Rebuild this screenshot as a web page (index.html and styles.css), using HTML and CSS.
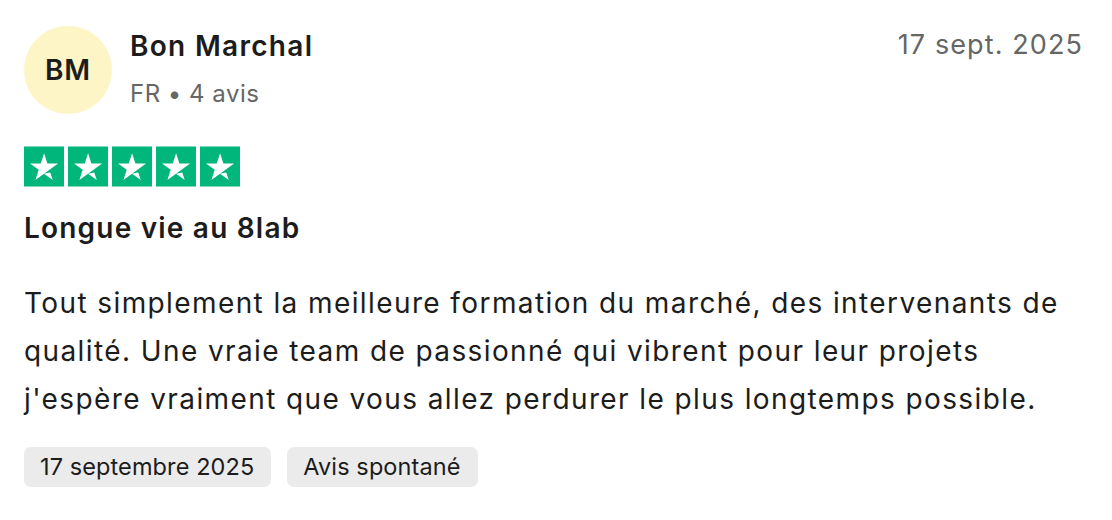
FILE: index.html
```html
<!DOCTYPE html>
<html lang="fr">
<head>
<meta charset="utf-8">
<link rel="stylesheet" href="styles.css">
</head>
<body>
<article class="review">
  <header class="head">
    <div class="avatar">BM</div>
    <div class="who">
      <div class="name">Bon Marchal</div>
      <div class="meta">FR • 4 avis</div>
    </div>
    <time class="date">17 sept. 2025</time>
  </header>
  <div class="stars">
    <svg class="star" viewBox="0 0 46.375 46.33"><path fill="#00b67a" d="M0 46.33h46.375V0H0z"/><path fill="#fff" d="M39.534 19.711L13.23 38.801l3.838-11.798-10.047-7.292h12.419l3.837-11.799 3.837 11.799h12.42zM23.279 31.51l7.183-1.51 2.862 8.8-10.045-7.29z"/></svg>
    <svg class="star" viewBox="0 0 46.375 46.33"><path fill="#00b67a" d="M0 46.33h46.375V0H0z"/><path fill="#fff" d="M39.534 19.711L13.23 38.801l3.838-11.798-10.047-7.292h12.419l3.837-11.799 3.837 11.799h12.42zM23.279 31.51l7.183-1.51 2.862 8.8-10.045-7.29z"/></svg>
    <svg class="star" viewBox="0 0 46.375 46.33"><path fill="#00b67a" d="M0 46.33h46.375V0H0z"/><path fill="#fff" d="M39.534 19.711L13.23 38.801l3.838-11.798-10.047-7.292h12.419l3.837-11.799 3.837 11.799h12.42zM23.279 31.51l7.183-1.51 2.862 8.8-10.045-7.29z"/></svg>
    <svg class="star" viewBox="0 0 46.375 46.33"><path fill="#00b67a" d="M0 46.33h46.375V0H0z"/><path fill="#fff" d="M39.534 19.711L13.23 38.801l3.838-11.798-10.047-7.292h12.419l3.837-11.799 3.837 11.799h12.42zM23.279 31.51l7.183-1.51 2.862 8.8-10.045-7.29z"/></svg>
    <svg class="star" viewBox="0 0 46.375 46.33"><path fill="#00b67a" d="M0 46.33h46.375V0H0z"/><path fill="#fff" d="M39.534 19.711L13.23 38.801l3.838-11.798-10.047-7.292h12.419l3.837-11.799 3.837 11.799h12.42zM23.279 31.51l7.183-1.51 2.862 8.8-10.045-7.29z"/></svg>
  </div>
  <h2 class="title">Longue vie au 8lab</h2>
  <p class="text">Tout simplement la meilleure formation du marché, des intervenants de qualité. Une vraie team de passionné qui vibrent pour leur projets j'espère vraiment que vous allez perdurer le plus longtemps possible.</p>
  <div class="tags">
    <span class="tag">17 septembre 2025</span>
    <span class="tag">Avis spontané</span>
  </div>
</article>
</body>
</html>
```
FILE: styles.css
```css
html, body {
  margin: 0;
  padding: 0;
  background: #ffffff;
}
body {
  font-family: Inter, "Noto Sans", sans-serif;
  color: #1c1c1c;
}
.review {
  padding: 26px 30px 0 24px;
}
.head {
  display: flex;
  align-items: flex-start;
}
.avatar {
  width: 88px;
  height: 88px;
  border-radius: 50%;
  background: #fef5c6;
  display: flex;
  align-items: center;
  justify-content: center;
  font-size: 28px;
  font-weight: 600;
  letter-spacing: 0.8px;
  color: #1c1c1c;
  flex: none;
}
.who {
  margin-left: 18px;
  flex: 1;
}
.name {
  font-size: 28px;
  font-weight: 600;
  line-height: 40px;
  letter-spacing: 1.3px;
}
.meta {
  font-size: 24px;
  line-height: 34px;
  margin-top: 11px;
  color: #666666;
  letter-spacing: 0.5px;
}
.date {
  font-size: 27px;
  line-height: 40px;
  color: #666666;
  letter-spacing: 1.1px;
  margin-top: -1px;
  margin-right: -1px;
}
.stars {
  display: flex;
  gap: 4px;
  margin-top: 32px;
}
.star {
  width: 40px;
  height: 41px;
  display: block;
}
.title {
  margin: 21px 0 0;
  font-size: 28px;
  line-height: 40px;
  font-weight: 600;
  letter-spacing: 1.2px;
}
.text {
  margin: 31px 0 0;
  width: 1058px;
  font-size: 28px;
  line-height: 48px;
  letter-spacing: 1.4px;
}
.tags {
  display: flex;
  gap: 16px;
  margin-top: 24px;
}
.tag {
  background: #ebebeb;
  border-radius: 7px;
  height: 40px;
  line-height: 40px;
  padding: 0 17px 0 16px;
  font-size: 23.5px;
  letter-spacing: 0.1px;
}
```
